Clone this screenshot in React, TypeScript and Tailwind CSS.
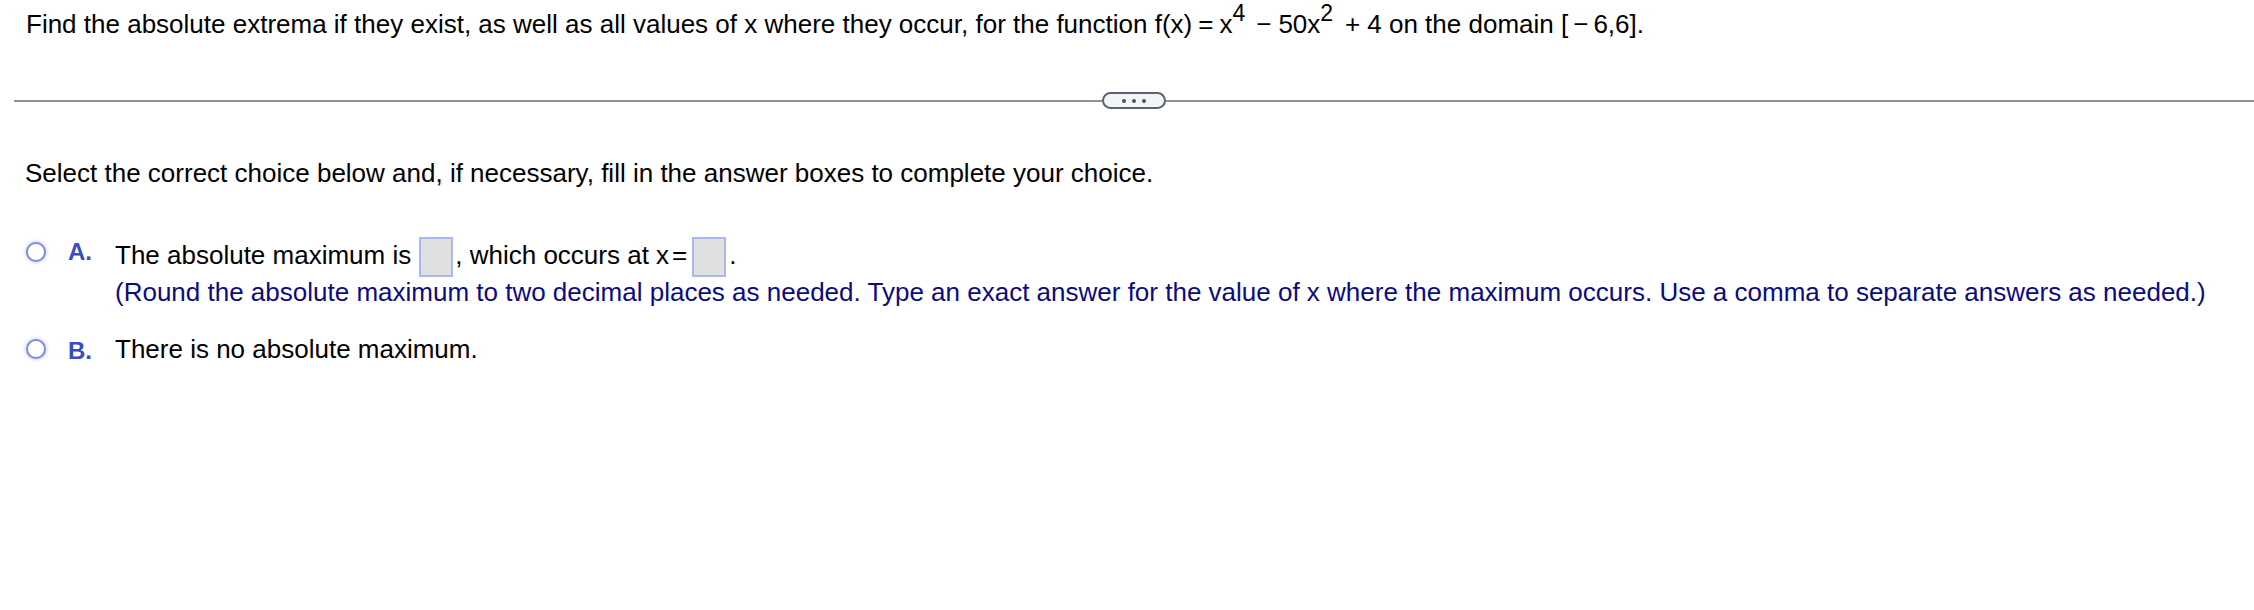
import React from 'react';

const font = { fontFamily: '"Liberation Sans", Arial, sans-serif' };

function Radio() {
  return (
    <span className="block w-[20px] h-[20px] rounded-full border-2 border-[#7d8ddb] bg-white shadow-[0_0_3px_1px_rgba(120,140,220,0.35)]" />
  );
}

function AnswerBox() {
  return <span className="inline-block w-[34px] h-[40px] bg-[#e0e0e0] border-2 border-[#a9b8ea]" />;
}

export default function App() {
  return (
    <div className="w-[2254px] h-[610px] bg-white text-black text-[26px] leading-[30px] overflow-hidden" style={font}>
      <div className="pl-[26px] pt-[9px] whitespace-nowrap">
        Find the absolute extrema if they exist, as well as all values of x where they occur, for the function f(x)
        <span className="mx-[6px]">=</span>x
        <span className="relative -top-[12px] text-[23px] mr-[4px]">4</span>
        <span className="mx-[7px]">−</span>50x
        <span className="relative -top-[12px] text-[23px] mr-[5px]">2</span>
        <span className="mx-[7px]">+</span>4 on the domain [<span className="mx-[5px]">−</span>6,6].
      </div>

      <div className="ml-[14px] mt-[52px] flex items-center h-[17px]">
        <div className="flex-1 h-[2px] bg-[#8b919d]" />
        <div className="w-[64px] h-[17px] rounded-full border-2 border-[#5a6270] bg-[#f3f4f6] flex items-center justify-center gap-[6px]">
          <span className="w-[4px] h-[4px] rounded-full bg-[#4b5260]" />
          <span className="w-[4px] h-[4px] rounded-full bg-[#4b5260]" />
          <span className="w-[4px] h-[4px] rounded-full bg-[#4b5260]" />
        </div>
        <div className="flex-1 h-[2px] bg-[#8b919d]" />
      </div>

      <div className="pl-[25px] mt-[49px] whitespace-nowrap">
        Select the correct choice below and, if necessary, fill in the answer boxes to complete your choice.
      </div>

      <div className="mt-[49px] flex items-start whitespace-nowrap">
        <div className="ml-[26px] mt-[5px]">
          <Radio />
        </div>
        <div className="ml-[22px] w-[47px] text-[24px] font-bold text-[#3a4cc1]">A.</div>
        <div>
          <div className="flex items-center h-[40px] pb-[4px]">
            <span>The absolute maximum is</span>
            <span className="ml-[8px] mr-[2px] flex self-start"><AnswerBox /></span>
            <span>, which occurs at x</span>
            <span className="mx-[3px]">=</span>
            <span className="ml-[2px] mr-[3px] flex self-start"><AnswerBox /></span>
            <span>.</span>
          </div>
          <div className="text-[#0b0b80]">
            (Round the absolute maximum to two decimal places as needed. Type an exact answer for the value of x where the maximum occurs. Use a comma to separate answers as needed.)
          </div>
        </div>
      </div>

      <div className="mt-[27px] flex items-start whitespace-nowrap">
        <div className="ml-[26px] mt-[5px]">
          <Radio />
        </div>
        <div className="ml-[22px] w-[47px] text-[24px] font-bold text-[#3a4cc1] mt-[2px]">B.</div>
        <div>There is no absolute maximum.</div>
      </div>
    </div>
  );
}
